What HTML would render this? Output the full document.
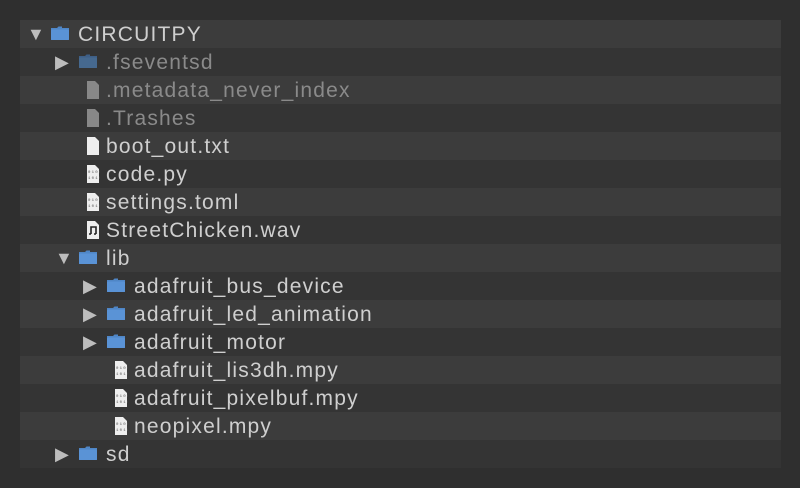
<!DOCTYPE html><html><head><style>
body{margin:0;width:800px;height:488px;background:#2f2f2f;overflow:hidden;font-family:"Liberation Sans",sans-serif;}
.p{position:absolute;left:20px;top:20px;width:761px;}
.r{height:28px;position:relative;color:#cfcfcf;font-size:21px;letter-spacing:1.2px;line-height:28px;}
.r:nth-child(even){background:#3c3c3c}.r:nth-child(odd){background:#343434}
.h{color:#8a8a8a}
.t{position:absolute;top:0;font-size:18px;color:#bdbdbd;letter-spacing:0}
.i{position:absolute;top:6px}
.i svg{display:block}
.x{position:absolute;top:1px}
</style></head><body><div class="p">
<script>
const F='<svg width="20" height="16" viewBox="0 0 20 16"><path d="M1 2h6l1.5-1.5H12V2h7v12H1z" fill="#4f86c6"/><rect x="1" y="3.5" width="18" height="10.5" rx="1" fill="#5a93d6"/></svg>';
const FD='<svg width="20" height="16" viewBox="0 0 20 16"><path d="M1 2h6l1.5-1.5H12V2h7v12H1z" fill="#3e5f87"/><rect x="1" y="3.5" width="18" height="10.5" rx="1" fill="#46698f"/></svg>';
const G='<svg width="14" height="18" viewBox="0 0 14 18"><path d="M1 0h8l4 4v14H1z" fill="#888"/></svg>';
const W='<svg width="14" height="18" viewBox="0 0 14 18"><path d="M1 0h8l4 4v14H1z" fill="#eee"/></svg>';
const C='<svg width="14" height="18" viewBox="0 0 14 18"><path d="M1 0h8l4 4v14H1z" fill="#eee"/><text x="2" y="8" font-size="4" fill="#555" font-family="Liberation Mono">0100</text><text x="2" y="14" font-size="4" fill="#555" font-family="Liberation Mono">1010</text></svg>';
const M='<svg width="14" height="18" viewBox="0 0 14 18"><path d="M1 0h8l4 4v14H1z" fill="#eee"/><path d="M5 13V6h5v7M3 13h2M8 13h2" stroke="#222" stroke-width="1.6" fill="none"/></svg>';
const rows=[[0,'▼',F,'CIRCUITPY'],[1,'▶',FD,'.fseventsd',1],[1,'',G,'.metadata_never_index',1],[1,'',G,'.Trashes',1],[1,'',W,'boot_out.txt'],[1,'',C,'code.py'],[1,'',C,'settings.toml'],[1,'',M,'StreetChicken.wav'],[1,'▼',F,'lib'],[2,'▶',F,'adafruit_bus_device'],[2,'▶',F,'adafruit_led_animation'],[2,'▶',F,'adafruit_motor'],[2,'',C,'adafruit_lis3dh.mpy'],[2,'',C,'adafruit_pixelbuf.mpy'],[2,'',C,'neopixel.mpy'],[1,'▶',F,'sd']];
let h='';for(const[l,t,ic,n,hd]of rows){const b=l*28;const isF=ic==F||ic==FD;
h+=`<div class="r${hd?' h':''}"><span class="t" style="left:${b+7}px">${t}</span><span class="i" style="left:${b+(isF?30:38)}px;top:${isF?6:5}px">${ic}</span><span class="x" style="left:${b+58}px">${n}</span></div>`;}
document.write(h);
</script></div></body></html>
